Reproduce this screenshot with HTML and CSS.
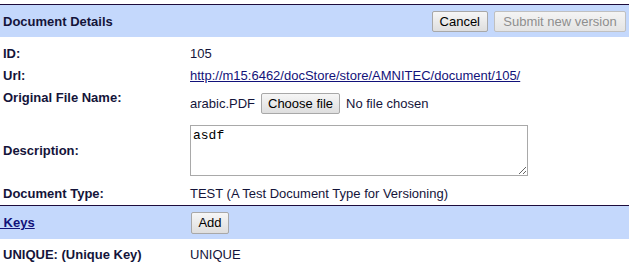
FILE: index.html
```html
<!DOCTYPE html>
<html lang="en">
<head>
    <meta charset="UTF-8">
    <title>Document Details</title>
    <link rel="stylesheet" href="styles.css">
</head>
<body>

    <!-- Document header -->
    <div class="band band-head">
        <span class="band-title">Document Details</span>
        <div class="actions">
            <button class="btn">Cancel</button>
            <button class="btn btn-wide" disabled>Submit new version</button>
        </div>
    </div>

    <div class="details">
        <div class="row row-id">
            <div class="label">ID:</div>
            <div class="value">105</div>
        </div>
        <div class="row row-url">
            <div class="label">Url:</div>
            <div class="value"><a href="#">http://m15:6462/docStore/store/AMNITEC/document/105/</a></div>
        </div>
        <div class="row row-file">
            <div class="label label-top">Original File Name:</div>
            <div class="value file-pick">
                <span>arabic.PDF</span>
                <button class="btn">Choose file</button>
                <span>No file chosen</span>
            </div>
        </div>
        <div class="row row-desc">
            <div class="label">Description:</div>
            <div class="value"><textarea class="desc-box">asdf</textarea></div>
        </div>
        <div class="row row-type">
            <div class="label">Document Type:</div>
            <div class="value">TEST (A Test Document Type for Versioning)</div>
        </div>
    </div>

    <!-- Keys -->
    <div class="band band-keys">
        <div class="label label-link"><a href="#">&nbsp;Keys</a></div>
        <div class="value"><button class="btn">Add</button></div>
    </div>

    <div class="row row-key">
        <div class="label">UNIQUE: (Unique Key)</div>
        <div class="value">UNIQUE</div>
    </div>

</body>
</html>
```

FILE: styles.css
```css
body {
    margin: 0;
    padding-top: 4px;
    font-family: "Liberation Sans", Arial, sans-serif;
    font-size: 13px;
    color: #14143a;
    background-color: #fff;
}

a {
    color: #12127a;
}

/* bandas azules */
.band {
    background-color: #c4d8fc;
    border-top: 1px solid #1d0c3c;
    display: flex;
    align-items: center;
}

.band-head {
    height: 32px;
    justify-content: space-between;
    padding: 0 3px;
}

.band-title {
    font-weight: bold;
}

.actions {
    display: flex;
    gap: 6px;
}

.btn {
    font-family: "Liberation Sans", Arial, sans-serif;
    font-size: 13px;
    color: #000;
    height: 21px;
    padding: 0 7px;
    border: 1px solid #a8a8a8;
    border-radius: 2px;
    background: linear-gradient(#f6f6f6, #dedede);
}

.btn:disabled {
    color: #8e8e8e;
    background: linear-gradient(#f4f4f4, #e4e4e4);
    border-color: #c0c0c0;
}

.btn-wide {
    width: 132px;
}

.details {
    padding-top: 5px;
}

.row {
    display: flex;
    align-items: center;
}

.label {
    width: 187px;
    padding-left: 3px;
    font-weight: bold;
    flex-shrink: 0;
}

.row-id { height: 22px; }
.row-url { height: 23px; }
.row-file { height: 33px; }
.row-desc { height: 61px; }
.row-type { height: 24px; }
.row-key { height: 30px; }

.label-top {
    align-self: flex-start;
    padding-top: 3px;
}

.file-pick {
    display: flex;
    align-items: center;
    gap: 6px;
}

.file-pick .btn {
    width: 79px;
    padding: 0;
}

.desc-box {
    display: block;
    box-sizing: border-box;
    width: 338px;
    height: 51px;
    margin: 0;
    padding: 2px;
    border: 1px solid #a9a9a9;
    font-family: "Liberation Mono", "DejaVu Sans Mono", monospace;
    font-size: 13px;
    color: #000;
}

.band-keys {
    height: 33px;
}

.label-link {
    padding-left: 0;
    width: 191px;
}

.band-keys .btn {
    height: 22px;
    width: 38px;
    padding: 0;
}
```
